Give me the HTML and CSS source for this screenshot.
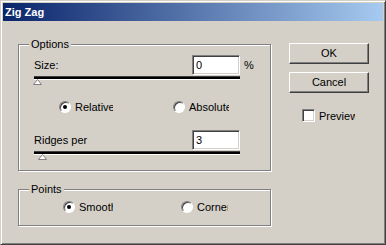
FILE: index.html
```html
<!DOCTYPE html>
<html lang="en">
<head>
    <meta charset="UTF-8">
    <title>Zig Zag</title>
    <link rel="stylesheet" href="styles.css">
</head>
<body>
    <div class="window">
        <!-- Title bar -->
        <div class="titlebar">Zig Zag</div>

        <div class="dialog">
            <div class="groups">
                <!-- Options -->
                <fieldset class="group options">
                    <legend>Options</legend>
                    <div class="group-body">
                        <div class="field">
                            <span class="field-label">Size:</span>
                            <input class="textbox" type="text" value="0">
                            <span class="unit">%</span>
                        </div>
                        <div class="slider">
                            <div class="track"></div>
                            <svg class="thumb" width="9" height="6" viewBox="0 0 9 6">
                                <path d="M4.5 0.5 L8.5 5.5 L0.5 5.5 Z" fill="#fff" stroke="#808080"/>
                            </svg>
                        </div>
                        <div class="radios">
                            <label class="radio first">
                                <span class="circle checked"></span>
                                <span class="clip" style="width: 38px">Relative</span>
                            </label>
                            <label class="radio">
                                <span class="circle"></span>
                                <span class="clip" style="width: 40px">Absolute</span>
                            </label>
                        </div>
                        <div class="field ridges">
                            <span class="field-label">Ridges per</span>
                            <input class="textbox" type="text" value="3">
                        </div>
                        <div class="slider">
                            <div class="track"></div>
                            <svg class="thumb thumb-ridges" width="9" height="6" viewBox="0 0 9 6">
                                <path d="M4.5 0.5 L8.5 5.5 L0.5 5.5 Z" fill="#fff" stroke="#808080"/>
                            </svg>
                        </div>
                    </div>
                </fieldset>

                <!-- Points -->
                <fieldset class="group points">
                    <legend>Points</legend>
                    <div class="group-body">
                        <div class="radios">
                            <label class="radio first">
                                <span class="circle checked"></span>
                                <span class="clip" style="width: 34px">Smooth</span>
                            </label>
                            <label class="radio">
                                <span class="circle"></span>
                                <span class="clip" style="width: 31px">Corner</span>
                            </label>
                        </div>
                    </div>
                </fieldset>
            </div>

            <!-- Buttons -->
            <div class="buttons">
                <div class="button">OK</div>
                <div class="button cancel">Cancel</div>
                <label class="check">
                    <span class="box"></span>
                    <span class="clip" style="width: 36px">Preview</span>
                </label>
            </div>
        </div>
    </div>
</body>
</html>
```

FILE: styles.css
```css
body {
    margin: 0;
    background-color: #d4d0c8;
    font-family: "Liberation Sans", Arial, sans-serif;
    font-size: 11px;
    color: #000;
}

/* Window frame */
.window {
    width: 386px;
    height: 245px;
    box-sizing: border-box;
    padding: 2px;
    border: 1px solid;
    border-color: #d4d0c8 #404040 #404040 #d4d0c8;
    box-shadow: inset 1px 1px #fff, inset -1px -1px #808080;
    background-color: #d4d0c8;
}
.titlebar {
    height: 18px;
    line-height: 18px;
    padding-left: 2px;
    color: #fff;
    font-weight: bold;
    background: linear-gradient(to right, #0a246a, #a6caf0);
}

.dialog {
    display: flex;
    padding: 17px 0 0 15px;
}

/* Group boxes */
.groups {
    width: 254px;
}
.group {
    width: 253px;
    box-sizing: border-box;
    min-width: 0;
    margin: 0;
    padding: 0;
    border: 1px solid #808080;
    box-shadow: inset 1px 1px #fff, 1px 1px #fff;
}
.group legend {
    margin-left: 10px;
    padding: 0 2px;
    line-height: 13px;
    background-color: #d4d0c8;
}
.options .group-body {
    padding: 4px 0 10px 15px;
}
.points {
    margin-top: 12px;
}
.points .group-body {
    padding: 4px 0 12px 44px;
}

/* Fields */
.field {
    display: flex;
    align-items: center;
    height: 20px;
}
.field.ridges {
    margin-top: 17px;
}
.field-label {
    width: 158px;
}
.textbox {
    width: 48px;
    height: 20px;
    box-sizing: border-box;
    margin: 0;
    padding: 0 3px;
    border: 1px solid;
    border-color: #808080 #fff #fff #808080;
    box-shadow: inset 1px 1px #404040, inset -1px -1px #d4d0c8;
    background-color: #fff;
    font-family: inherit;
    font-size: 11px;
    color: #000;
    outline: none;
}
.unit {
    margin-left: 4px;
}

/* Sliders */
.slider {
    width: 206px;
    height: 8px;
    margin-top: 2px;
}
.track {
    height: 2px;
    background-color: #000;
    box-shadow: 0 -1px #404040, 0 1px #fff;
}
.thumb {
    display: block;
    margin-left: -1px;
}
.thumb-ridges {
    margin-left: 4px;
}

/* Radios */
.radios {
    display: flex;
    align-items: center;
    height: 13px;
}
.options .radios {
    margin-top: 15px;
}
.radio {
    display: flex;
    align-items: center;
    gap: 4px;
}
.options .radio.first {
    margin-left: 25px;
    width: 114px;
}
.points .radio.first {
    width: 118px;
}
.circle {
    position: relative;
    width: 12px;
    height: 12px;
    box-sizing: border-box;
    border-radius: 50%;
    border: 1px solid;
    border-color: #808080 #fff #fff #808080;
    box-shadow: inset 1px 1px #404040;
    background-color: #fff;
}
.circle.checked::after {
    content: "";
    position: absolute;
    left: 3px;
    top: 3px;
    width: 4px;
    height: 4px;
    border-radius: 50%;
    background-color: #000;
}
.clip {
    display: block;
    overflow: hidden;
    white-space: nowrap;
}

/* Buttons */
.buttons {
    width: 80px;
    margin: 5px 0 0 17px;
}
.button {
    height: 21px;
    box-sizing: border-box;
    line-height: 19px;
    text-align: center;
    border: 1px solid;
    border-color: #fff #404040 #404040 #fff;
    box-shadow: inset -1px -1px #808080;
}
.button.cancel {
    margin-top: 8px;
}
.check {
    display: flex;
    align-items: center;
    gap: 4px;
    margin: 16px 0 0 13px;
}
.box {
    width: 13px;
    height: 13px;
    box-sizing: border-box;
    border: 1px solid;
    border-color: #808080 #fff #fff #808080;
    box-shadow: inset 1px 1px #404040, inset -1px -1px #d4d0c8;
    background-color: #fff;
}
```
